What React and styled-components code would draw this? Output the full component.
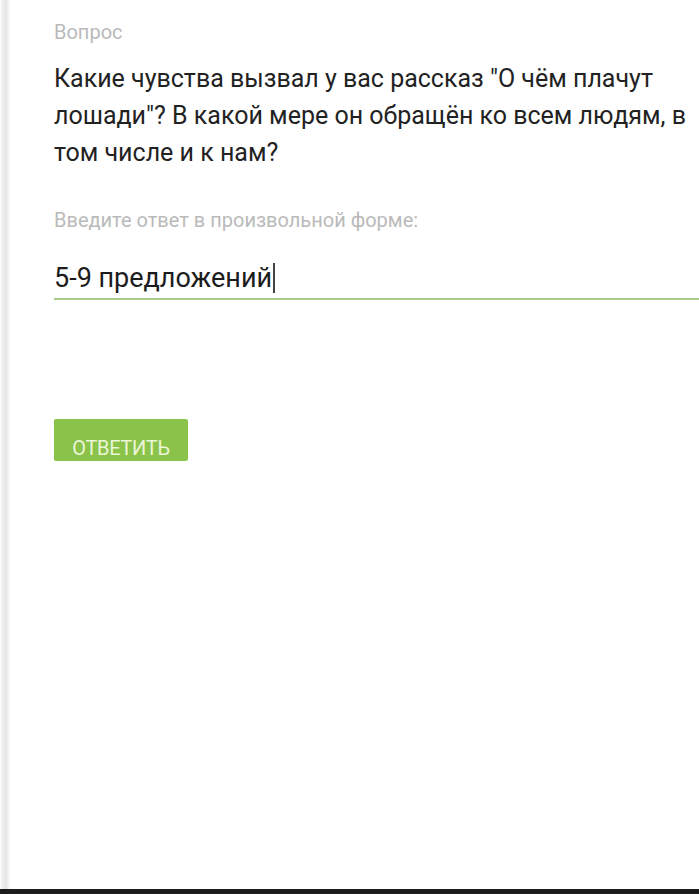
import React from 'react';
import styled, { createGlobalStyle } from 'styled-components';

const GlobalStyle = createGlobalStyle`
    html, body {
        margin: 0;
        padding: 0;
        background: #ffffff;
    }
    body {
        font-family: Roboto, "Noto Sans", sans-serif;
    }
`;

const Screen = styled.div`
    width: 699px;
    height: 894px;
    display: flex;
    flex-direction: column;
    background: #ffffff;
    overflow: hidden;
`;

const Body = styled.div`
    flex: 1;
    display: flex;
`;

const Edge = styled.div`
    width: 10px;
    flex: none;
    background: linear-gradient(to right, #ffffff 0, #ececec 3px, #e6e6e6 6px, #f4f4f4 9px, #ffffff 10px);
`;

const Content = styled.div`
    flex: 1;
    padding: 20px 0 0 44px;
    display: flex;
    flex-direction: column;
`;

const Label = styled.div`
    font-size: 20px;
    color: #bababa;
    line-height: 24px;
`;

const Question = styled.p`
    margin: 16px 0 0;
    font-size: 25px;
    line-height: 37px;
    color: #222222;
`;

const Hint = styled(Label)`
    margin-top: 37px;
`;

const Field = styled.div`
    margin-top: 25px;
    display: flex;
    align-items: center;
    height: 41px;
    border-bottom: 2px solid #a9cc8c;
    font-size: 27px;
    color: #1c1c1c;
`;

const Caret = styled.span`
    display: inline-block;
    width: 1.5px;
    height: 30px;
    margin-left: 1px;
    background: #444444;
`;

const Button = styled.button`
    margin-top: 119px;
    align-self: flex-start;
    width: 134px;
    height: 42px;
    padding: 16px 0 0;
    border: 0;
    border-radius: 2px;
    background: #8bc34a;
    color: #eaf6d6;
    font-family: Roboto, "Noto Sans", sans-serif;
    font-size: 20px;
    letter-spacing: -0.3px;
    line-height: 26px;
    text-align: center;
`;

const BottomBar = styled.div`
    height: 5px;
    flex: none;
    background: #1c1c1c;
`;

export default function App() {
    return (
        <>
            <GlobalStyle />
            <Screen>
                <Body>
                    <Edge />
                    <Content>
                        <Label>Вопрос</Label>
                        <Question>
                            Какие чувства вызвал у вас рассказ "О чём плачут лошади"? В какой мере он обращён ко всем людям, в том числе и к нам?
                        </Question>
                        <Hint>Введите ответ в произвольной форме:</Hint>
                        <Field>
                            5-9 предложений<Caret />
                        </Field>
                        <Button>ОТВЕТИТЬ</Button>
                    </Content>
                </Body>
                <BottomBar />
            </Screen>
        </>
    );
}
